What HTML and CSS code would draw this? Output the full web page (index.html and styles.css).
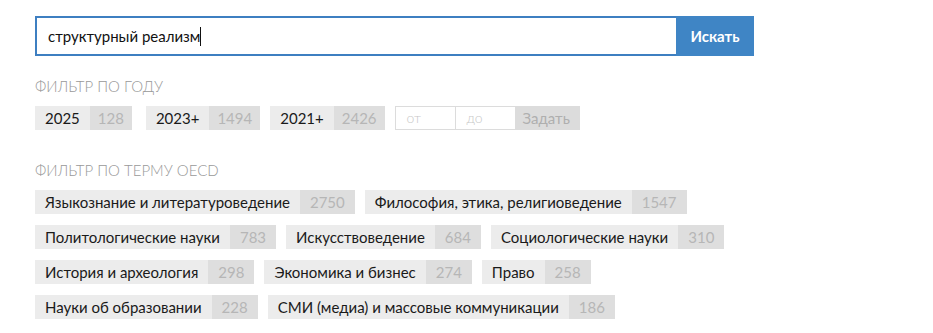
FILE: index.html
```html
<!DOCTYPE html>
<html lang="ru">
<head>
<meta charset="utf-8">
<link rel="stylesheet" href="styles.css">
</head>
<body>
<div class="page">
  <form class="search">
    <div class="search-input"><span class="query">структурный реализм</span><span class="caret"></span></div>
    <button type="button" class="search-btn">Искать</button>
  </form>

  <div class="section years">
    <div class="section-title">Фильтр по году</div>
    <div class="chips">
      <a class="chip first"><span class="label">2025</span><span class="count">128</span></a>
      <a class="chip"><span class="label">2023+</span><span class="count">1494</span></a>
      <a class="chip"><span class="label">2021+</span><span class="count">2426</span></a>
      <div class="range">
        <span class="range-input">от</span>
        <span class="range-input">до</span>
        <span class="range-btn">Задать</span>
      </div>
    </div>
  </div>

  <div class="section oecd">
    <div class="section-title">Фильтр по терму OECD</div>
    <div class="chips">
      <a class="chip"><span class="label">Языкознание и литературоведение</span><span class="count">2750</span></a>
      <a class="chip"><span class="label">Философия, этика, религиоведение</span><span class="count">1547</span></a>
    </div>
    <div class="chips">
      <a class="chip"><span class="label">Политологические науки</span><span class="count">783</span></a>
      <a class="chip"><span class="label">Искусствоведение</span><span class="count">684</span></a>
      <a class="chip"><span class="label">Социологические науки</span><span class="count">310</span></a>
    </div>
    <div class="chips">
      <a class="chip"><span class="label">История и археология</span><span class="count">298</span></a>
      <a class="chip"><span class="label">Экономика и бизнес</span><span class="count">274</span></a>
      <a class="chip"><span class="label">Право</span><span class="count">258</span></a>
    </div>
    <div class="chips">
      <a class="chip"><span class="label">Науки об образовании</span><span class="count">228</span></a>
      <a class="chip"><span class="label">СМИ (медиа) и массовые коммуникации</span><span class="count">186</span></a>
    </div>
  </div>
</div>
</body>
</html>
```

FILE: styles.css
```css
* { box-sizing: border-box; }
html, body { margin: 0; padding: 0; background: #fff; }
body {
  font-family: "Lato", "Liberation Sans", sans-serif;
  color: #1a1a1a;
}
.page {
  padding: 16px 35px 0;
}
.search {
  display: flex;
  width: 719px;
  height: 40px;
  margin: 0;
}
.search-input {
  flex: 1;
  border: 2px solid #3e7fc1;
  border-right: none;
  display: flex;
  align-items: center;
  padding-left: 11px;
  font-size: 15px;
  color: #111;
}
.caret {
  display: inline-block;
  width: 1px;
  height: 19px;
  background: #111;
}
.search-btn {
  width: 78px;
  border: none;
  background: #3f85c5;
  color: #fff;
  font-family: inherit;
  font-weight: 700;
  font-size: 15px;
  padding: 0;
}
.section { margin-top: 21px; }
.oecd { margin-top: 31px; }
.section-title {
  text-transform: uppercase;
  color: #999;
  font-size: 15px;
  font-weight: 300;
  line-height: 18px;
  margin-bottom: 11px;
}
.chips {
  display: flex;
  gap: 10px;
  margin-bottom: 11px;
}
.chip {
  display: flex;
  height: 24px;
  line-height: 24px;
  font-size: 15px;
}
.label {
  background: #ececec;
  padding: 0 10px;
  color: #1a1a1a;
}
.count {
  background: #dedede;
  color: #b6b6b6;
  padding: 0 10px;
}
.years .count { padding: 0 8px; }
.years .first { margin-right: 4px; }
.range {
  display: flex;
  height: 24px;
}
.range-input {
  width: 60px;
  border: 1px solid #dcdcdc;
  border-right: none;
  background: #fff;
  color: #c8c8c8;
  font-size: 14px;
  font-weight: 300;
  line-height: 22px;
  padding-left: 11px;
}
.range-btn {
  background: #dcdcdc;
  color: #afafaf;
  font-size: 15px;
  line-height: 24px;
  padding: 0 8px;
  width: 65px;
}
```
